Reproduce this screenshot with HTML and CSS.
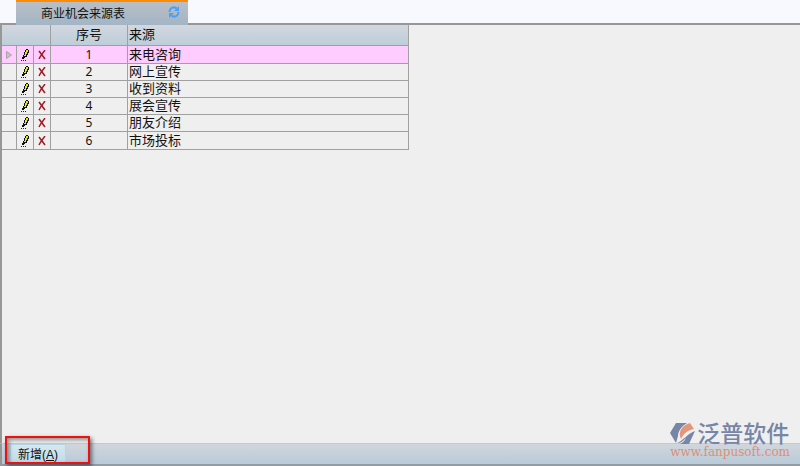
FILE: index.html
```html
<!DOCTYPE html>
<html lang="zh-CN">
  <head>
    <meta charset="UTF-8" />
    <title>商业机会来源表</title>
    <meta name="viewport" content="width=device-width,initial-scale=1" />
    <link rel="stylesheet" href="styles.css">
  </head>
  <body>
    <svg class="sprite" aria-hidden="true">
      <symbol id="pencil" viewBox="0 0 9 12">
        <path d="M5 0h2v1h1v3H7v2H6v2H4v1H3v1H1V8h1V6h1V3h1V1h1z" fill="#111" />
        <path d="M5 1h2v2H6v2H5v2H3V6h1V3h1z" fill="#e8e41c" />
        <path d="M0 11h1v1H0zM2 11h1v1H2zM4 11h1v1H4z" fill="#222" />
      </symbol>
      <symbol id="cross" viewBox="0 0 8 10">
        <path d="M1 1l6 8" stroke="#9c1c28" stroke-width="1.6" />
        <path d="M7 0C5 3 3 5 1 9" fill="none" stroke="#9c1c28" stroke-width="1.4" />
      </symbol>
    </svg>

    <header class="tabs">
      <div class="tab">
        <span class="tab-title">商业机会来源表</span>
        <button class="refresh" type="button" aria-label="刷新">
          <svg width="12" height="12" viewBox="0 0 12 12" fill="none" stroke="#4ba0f4" stroke-width="2">
            <path d="M1.500 6Q2 2 5 1.500Q7 1 8.500 2.500" />
            <path d="M6 5h5V0z" fill="#4ba0f4" stroke="none" />
            <path d="M10.500 6Q10 10 7 10.500Q5 11 3.500 9.500" />
            <path d="M6 7H1v5z" fill="#4ba0f4" stroke="none" />
          </svg>
        </button>
      </div>
    </header>

    <main class="content">
      <table class="grid">
        <colgroup>
          <col class="col-mark" />
          <col class="col-icon" />
          <col class="col-icon" />
          <col class="col-number" />
          <col class="col-source" />
        </colgroup>
        <thead>
          <tr>
            <th colspan="3"></th>
            <th>序号</th>
            <th class="source">来源</th>
          </tr>
        </thead>
        <tbody>
          <tr class="current">
            <td><svg class="marker" width="6" height="8" viewBox="0 0 6 8"><path d="M.5.500L5.500 4L.5 7.500z" /></svg></td>
            <td><button type="button" aria-label="编辑"><svg width="9" height="12"><use href="#pencil" /></svg></button></td>
            <td><button type="button" aria-label="删除"><svg width="8" height="10"><use href="#cross" /></svg></button></td>
            <td class="number">1</td>
            <td class="source">来电咨询</td>
          </tr>
          <tr>
            <td></td>
            <td><button type="button" aria-label="编辑"><svg width="9" height="12"><use href="#pencil" /></svg></button></td>
            <td><button type="button" aria-label="删除"><svg width="8" height="10"><use href="#cross" /></svg></button></td>
            <td class="number">2</td>
            <td class="source">网上宣传</td>
          </tr>
          <tr>
            <td></td>
            <td><button type="button" aria-label="编辑"><svg width="9" height="12"><use href="#pencil" /></svg></button></td>
            <td><button type="button" aria-label="删除"><svg width="8" height="10"><use href="#cross" /></svg></button></td>
            <td class="number">3</td>
            <td class="source">收到资料</td>
          </tr>
          <tr>
            <td></td>
            <td><button type="button" aria-label="编辑"><svg width="9" height="12"><use href="#pencil" /></svg></button></td>
            <td><button type="button" aria-label="删除"><svg width="8" height="10"><use href="#cross" /></svg></button></td>
            <td class="number">4</td>
            <td class="source">展会宣传</td>
          </tr>
          <tr>
            <td></td>
            <td><button type="button" aria-label="编辑"><svg width="9" height="12"><use href="#pencil" /></svg></button></td>
            <td><button type="button" aria-label="删除"><svg width="8" height="10"><use href="#cross" /></svg></button></td>
            <td class="number">5</td>
            <td class="source">朋友介绍</td>
          </tr>
          <tr>
            <td></td>
            <td><button type="button" aria-label="编辑"><svg width="9" height="12"><use href="#pencil" /></svg></button></td>
            <td><button type="button" aria-label="删除"><svg width="8" height="10"><use href="#cross" /></svg></button></td>
            <td class="number">6</td>
            <td class="source">市场投标</td>
          </tr>
        </tbody>
      </table>
    </main>

    <footer class="toolbar">
      <button class="add" type="button" accesskey="a">新增(<u>A</u>)</button>
      <div class="highlight"></div>
      <div class="brand">
        <div class="brand-name">
          <svg width="25" height="23" viewBox="0 0 25 23">
            <path d="M6 1h11C12 4 8 9 8 14L6 21L0 11z" fill="#7785a6" />
            <path d="M10 14C9 8 13 3 20 1L24 7C18 8 14 11 11 17z" fill="#e3967c" />
            <path d="M7 21C13 19 17 12 25 9L19 22H10C14 20 15 18 16 16C13 19 11 21 7 21z" fill="#7785a6" />
          </svg>
          <span>泛普软件</span>
        </div>
        <a class="brand-url" href="http://www.fanpusoft.com">www.fanpusoft.com</a>
      </div>
    </footer>
  </body>
</html>
```

FILE: styles.css
```css
* {
  box-sizing: border-box;
}
body {
  display: flex;
  flex-direction: column;
  min-height: 100vh;
  margin: 0;
  background: #efefef;
  color: #111;
  font-family: "Liberation Sans", "Noto Sans CJK SC", sans-serif;
  font-size: 12px;
}
button {
  padding: 0;
  border: none;
  background: none;
  color: inherit;
  font: inherit;
  cursor: pointer;
}
svg {
  display: block;
}
.sprite {
  position: absolute;
  width: 0;
  height: 0;
}
.tabs {
  display: flex;
  height: 25px;
  padding-left: 16px;
  background: linear-gradient(#f8f9ff 23px, #979797 23px);
}
.tab {
  display: flex;
  align-items: center;
  justify-content: space-between;
  width: 172px;
  padding: 0 8px 3px 25px;
  border-top: 2px solid #ff8c00;
  background: linear-gradient(#b9bec7, #a3b5c4);
}
.content {
  flex: 1;
  border-left: 2px solid #979797;
}
.grid {
  width: 407px;
  table-layout: fixed;
  border-collapse: separate;
  border-spacing: 0;
  font-size: 13px;
  line-height: 16px;
  text-align: center;
}
.col-mark {
  width: 15px;
}
.col-icon {
  width: 17px;
}
.col-number {
  width: 77px;
}
.grid th,
.grid td {
  height: 17px;
  padding: 0;
  border-right: 1px solid #a0a0a0;
  border-bottom: 1px solid #a0a0a0;
}
.grid th {
  height: 21px;
  background: linear-gradient(#d3d7df, #bdced9);
  font-weight: normal;
}
.grid .current td {
  height: 18px;
  background: #ffccff;
}
.grid tr:last-child td {
  height: 18px;
}
.grid .number {
  font-family: "Noto Sans", sans-serif;
  font-size: 12px;
}
.grid .source {
  padding-left: 1px;
  text-align: left;
}
.grid svg {
  margin: 0 auto;
}
.grid button {
  display: block;
  margin: 0 auto;
}
.marker {
  fill: #c4c4c4;
  stroke: #a5a5a5;
}
.toolbar {
  position: relative;
  display: flex;
  height: 23px;
  padding-left: 10px;
  border-top: 1px solid #c5c9cb;
  border-bottom: 2px solid #929ca4;
  border-left: 2px solid #979797;
  background: linear-gradient(#d1d6dc, #b9cad9);
}
.toolbar .add {
  width: 56px;
  margin-left: -2px;
  padding-bottom: 2px;
  border: 1px solid #b5d5e2;
  background: linear-gradient(#d5e8ef, #bddce9);
}
.highlight {
  position: absolute;
  left: 3px;
  bottom: 0;
  width: 85px;
  height: 28px;
  border: 2px solid #ee1111;
  box-shadow: 2px 2px 4px rgba(0, 0, 0, 0.5), inset 2px 2px 4px rgba(0, 0, 0, 0.4);
  pointer-events: none;
}
.brand {
  position: absolute;
  right: 10px;
  bottom: 5px;
}
.brand-name {
  display: flex;
  align-items: center;
  gap: 2px;
  height: 25px;
  color: #7785a6;
  font-size: 23px;
  font-weight: 500;
  line-height: 22px;
}
.brand-url {
  display: block;
  color: #de8e76;
  font-family: "DejaVu Serif", serif;
  font-size: 12px;
  line-height: 13px;
  text-align: right;
  text-decoration: none;
}
```
